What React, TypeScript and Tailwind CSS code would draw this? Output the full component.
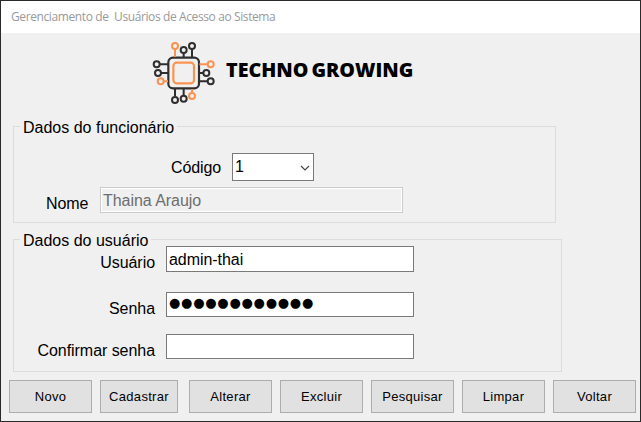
import React from "react";

const INK = "#2e2e2e";
const ORANGE = "#fb9350";

function ChipLogo() {
  return (
    <svg width="80" height="75" viewBox="0 0 240 225" fill="none" strokeWidth="6">
      <g stroke={INK}>
        <path d="M116 55V67M141 43V67M45 88H70M48 114H70M162 114H174M162 139H187M90 161V184M116 161V181" />
        <circle cx="116" cy="45" r="9" />
        <circle cx="141" cy="33" r="9" />
        <circle cx="35" cy="88" r="9" />
        <circle cx="39" cy="114" r="9" />
        <circle cx="184" cy="114" r="9" />
        <circle cx="197" cy="139" r="9" />
        <circle cx="90" cy="195" r="9" />
        <circle cx="116" cy="191" r="9" />
        <rect x="70" y="68" width="92" height="92" rx="14" strokeWidth="6.5" />
      </g>
      <g stroke={ORANGE}>
        <path d="M90 43V66M163 88H187M57 139H69M141 162V172" />
        <circle cx="90" cy="33" r="9" />
        <circle cx="197" cy="88" r="9" />
        <circle cx="47" cy="139" r="9" />
        <circle cx="141" cy="183" r="9" />
        <rect x="85" y="83" width="62" height="62" rx="10" strokeWidth="6.5" />
      </g>
    </svg>
  );
}

function Button({ label, className }: { label: string; className: string }) {
  return (
    <button
      type="button"
      className={`h-[33px] shrink-0 border border-[#adadad] bg-[#e1e1e1] text-center text-[13px] leading-[15px] tracking-[0.3px] ${className}`}
    >
      {label}
    </button>
  );
}

function Field({ label, boxClass, children }: {
  label: string;
  boxClass: string;
  children?: React.ReactNode;
}) {
  return (
    <div className="flex h-[26px] items-start">
      <label className="w-[141px] shrink-0 pt-[8px] text-right leading-[18px] tracking-[-0.05px]">{label}</label>
      <div className={`ml-[11px] w-[248px] shrink-0 border border-[#7a7a7a] bg-white pl-[2px] leading-[18px] tracking-[-0.05px] ${boxClass}`}>
        {children}
      </div>
    </div>
  );
}

export default function App() {
  return (
    <div className="flex h-[422px] w-[641px] flex-col overflow-hidden border border-[#2b2a2b] bg-[#f0f0f0] font-['Liberation_Sans',Arial,sans-serif] text-[16px] whitespace-pre text-black">
      <header className="h-8 shrink-0 bg-white pt-[7px] pl-[10px] font-['Open_Sans',sans-serif] text-[12px] leading-[18px] tracking-[-0.39px] text-[#999999]">
        Gerenciamento de  Usuários de Acesso ao Sistema
      </header>

      <div className="flex h-[93px] shrink-0 pt-[2px] pl-[144px]">
        <ChipLogo />
        <div className="flex gap-[3px] pt-[22px] pl-[1px] font-['Open_Sans',sans-serif] text-[19.7px] leading-[26px] font-extrabold">
          <span>TECHNO</span>
          <span>GROWING</span>
        </div>
      </div>

      <section className="ml-3 h-[97px] w-[543px] shrink-0 border border-[#dcdcdc]">
        <div className="-mt-[8px] ml-[6px] w-[157px] bg-[#f0f0f0] pl-[3px] leading-[18px]">Dados do funcionário</div>
        <div className="mt-[16px] flex items-start pl-[157px]">
          <label className="w-[49px] shrink-0 pt-[6px] leading-[18px] tracking-[-0.1px]">Código</label>
          <div className="ml-[12px] flex h-7 w-[82px] items-start justify-between border border-[#7a7a7a] bg-white pt-1 pr-[3px] pl-[2px] leading-[18px]">
            <span>1</span>
            <svg width="10" height="8" viewBox="0 0 10 8" fill="none" stroke="#444" className="mt-[6px]">
              <path d="M1 2L5 6L9 2" strokeWidth="1.1" />
            </svg>
          </div>
        </div>
        <div className="mt-[6px] flex items-start pl-8">
          <label className="w-[42px] shrink-0 pt-[8px] leading-[18px] tracking-[-0.1px]">Nome</label>
          <div className="ml-3 h-[26px] w-[303px] border border-[#cccccc]">
            <div className="h-full border border-white pt-[3px] pl-px leading-[18px] tracking-[-0.05px] text-[#6d6d6d]">Thaina Araujo</div>
          </div>
        </div>
      </section>

      <section className="mt-4 ml-3 h-[133px] w-[549px] shrink-0 border border-[#dcdcdc]">
        <div className="-mt-[8px] ml-[6px] w-[131px] bg-[#f0f0f0] pl-[3px] leading-[18px]">Dados do usuário</div>
        <div className="-mt-[4px] flex flex-col">
          <Field label="Usuário" boxClass="h-[26px] pt-[4px]">admin-thai</Field>
          <div className="h-5" />
          <Field label="Senha" boxClass="h-[25px] pt-[1px]">
            <span className="block font-['DejaVu_Sans',sans-serif] text-[13px] leading-[18px] tracking-[0.74px]">●●●●●●●●●●●●</span>
          </Field>
          <div className="h-4" />
          <Field label="Confirmar senha" boxClass="h-[25px]" />
        </div>
      </section>

      <footer className="mt-2 flex pl-2">
        <Button label="Novo" className="w-[83px]" />
        <Button label="Cadastrar" className="ml-2 w-[78px]" />
        <Button label="Alterar" className="ml-[11px] w-[83px]" />
        <Button label="Excluir" className="ml-2 w-[83px]" />
        <Button label="Pesquisar" className="ml-2 w-[83px]" />
        <Button label="Limpar" className="ml-2 w-[83px]" />
        <Button label="Voltar" className="ml-2 w-[83px]" />
      </footer>
    </div>
  );
}
